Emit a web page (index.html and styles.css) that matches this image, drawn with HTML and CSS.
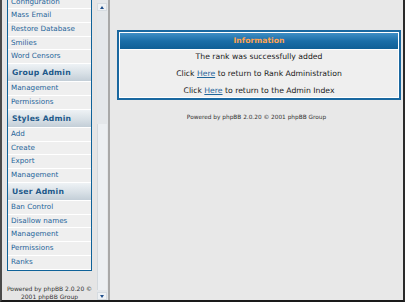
FILE: index.html
```html
<!DOCTYPE html>
<html>
    <head>
        <meta charset='utf-8'>
        <title>phpBB Administration</title>
        <link rel="stylesheet" href="styles.css">
    </head>
    <body>
        <div class="window">
            <div class="navframe">
                <div class="navpane">
                    <div class="navbox">
                        <a class="row" href="#">Configuration</a>
                        <a class="row" href="#">Mass Email</a>
                        <a class="row" href="#">Restore Database</a>
                        <a class="row" href="#">Smilies</a>
                        <a class="row" href="#">Word Censors</a>
                        <div class="cat">Group Admin</div>
                        <a class="row" href="#">Management</a>
                        <a class="row" href="#">Permissions</a>
                        <div class="cat">Styles Admin</div>
                        <a class="row" href="#">Add</a>
                        <a class="row" href="#">Create</a>
                        <a class="row" href="#">Export</a>
                        <a class="row" href="#">Management</a>
                        <div class="cat">User Admin</div>
                        <a class="row" href="#">Ban Control</a>
                        <a class="row" href="#">Disallow names</a>
                        <a class="row" href="#">Management</a>
                        <a class="row" href="#">Permissions</a>
                        <a class="row" href="#">Ranks</a>
                    </div>
                    <div class="copy">Powered by phpBB 2.0.20 &copy;<br>2001 phpBB Group</div>
                </div>
                <div class="scrollbar">
                    <div class="sbtn up"></div>
                    <div class="track"><div class="thumb"></div></div>
                    <div class="sbtn down"></div>
                </div>
            </div>
            <div class="mainframe">
                <div class="forumline">
                    <div class="thhead">Information</div>
                    <div class="msg">
                        The rank was successfully added<br><br>
                        Click <a href="#">Here</a> to return to Rank Administration<br><br>
                        Click <a href="#">Here</a> to return to the Admin Index
                    </div>
                </div>
                <div class="copyright">Powered by phpBB 2.0.20 &copy; 2001 phpBB Group</div>
            </div>
        </div>
    </body>
</html>
```

FILE: styles.css
```css
body {
    margin: 0;
    background: #fff;
    font-family: "DejaVu Sans", Verdana, sans-serif;
}
.window {
    display: flex;
    width: 401px;
    height: 300px;
    border-left: 2px solid #4a4a4a;
    border-right: 2px solid #2a2a2a;
    border-bottom: 2px solid #1a1a1a;
    overflow: hidden;
}
.navframe {
    display: flex;
    width: 106px;
    background: #e5e5e5;
    overflow: hidden;
}
.navpane {
    width: 95px;
}
.navbox {
    margin: -6.35px 0 0 5px;
    width: 83px;
    border: 1px solid #0f6299;
    background: #fff;
    padding-bottom: 1px;
}
.row {
    display: block;
    margin-top: 1px;
    height: 12.7px;
    line-height: 12.7px;
    padding-left: 3px;
    background: #efefef;
    color: #1f659a;
    font-size: 7.2px;
    text-decoration: none;
    white-space: nowrap;
}
.cat {
    margin-top: 1px;
    height: 17.3px;
    line-height: 17.3px;
    padding-left: 4px;
    background: linear-gradient(#eef2f5, #d8e0e6 55%, #c3ced7);
    color: #22598a;
    font-size: 7.7px;
    font-weight: bold;
    letter-spacing: 0.2px;
    white-space: nowrap;
}
.copy {
    margin-top: 14.5px;
    font-size: 6px;
    line-height: 8px;
    text-align: center;
    color: #333;
}
.scrollbar {
    display: flex;
    flex-direction: column;
    width: 11px;
    padding-top: 3px;
    background: #e4e7ea;
}
.sbtn {
    height: 8px;
    width: 10px;
    background: #eef1f4;
    border: 1px solid #d6dce1;
    box-sizing: border-box;
    display: flex;
    align-items: center;
    justify-content: center;
}
.sbtn::after {
    content: "";
    border-left: 2.5px solid transparent;
    border-right: 2.5px solid transparent;
}
.up::after {
    border-bottom: 3px solid #1f4f8c;
}
.down::after {
    border-top: 3px solid #1f4f8c;
}
.track {
    flex: 1;
    display: flex;
    flex-direction: column;
    justify-content: flex-end;
    padding-bottom: 2px;
}
.thumb {
    height: 166px;
    width: 10px;
    background: #eceff2;
    border-left: 1px solid #d3d9de;
    box-sizing: border-box;
}
.mainframe {
    flex: 1;
    border-left: 2px solid #a8a8a8;
    background: #e8e8e8;
}
.forumline {
    margin: 30px 0 0 7px;
    width: 278px;
    border: 2px solid #1a68a0;
    padding: 1px;
    background: #fff;
}
.thhead {
    height: 16px;
    line-height: 16px;
    margin-bottom: 1px;
    background: linear-gradient(#3f8ec5, #1a6ea8 50%, #0f5f96);
    color: #ffa34f;
    font-size: 7.7px;
    font-weight: bold;
    text-align: center;
}
.msg {
    padding: 3px 0 1px;
    background: #efefef;
    font-size: 7.7px;
    line-height: 8.6px;
    text-align: center;
    color: #1a1a1a;
}
.msg a {
    color: #1f659a;
}
.copyright {
    margin-top: 12.7px;
    font-size: 5.8px;
    line-height: 8px;
    text-align: center;
    color: #333;
}
```
